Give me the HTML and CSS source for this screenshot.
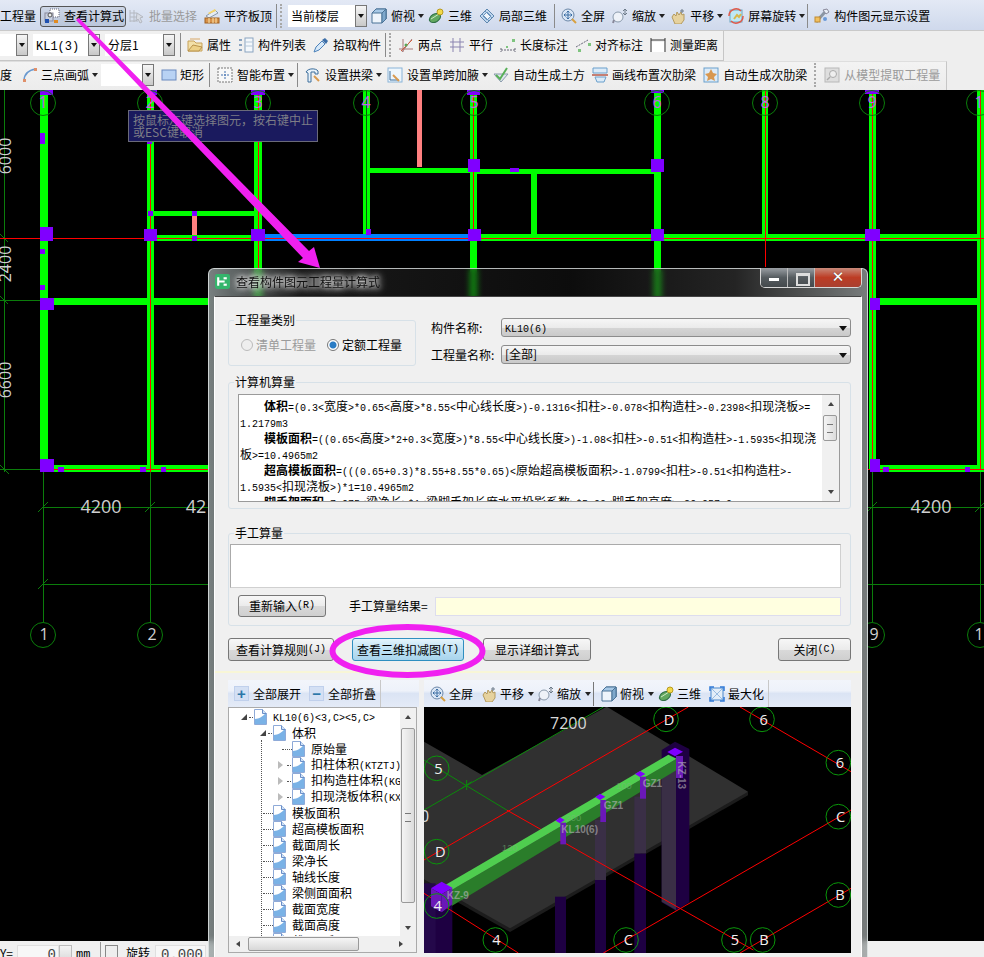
FILE: index.html
```html
<!DOCTYPE html>
<html lang="zh-CN">
<head>
<meta charset="utf-8">
<title>查看构件图元工程量计算式</title>
<link rel="stylesheet" href="styles.css">
</head>
<body>
<svg class="defs" width="0" height="0" aria-hidden="true">
  <symbol id="i-calc" viewBox="0 0 16 16"><rect x="6" y="1" width="9" height="8" fill="#fff" stroke="#667" stroke-dasharray="1 1"/><rect x="1" y="5" width="8" height="8" fill="#c8d0e0" stroke="#889"/><rect x="1" y="11" width="4" height="4" fill="#1e50b0"/><rect x="10" y="12" width="4" height="3" fill="#e08a20"/><circle cx="6" cy="7" r="2" fill="#eee" stroke="#555"/></symbol>
  <symbol id="i-batch" viewBox="0 0 16 16"><g fill="none" stroke="#b4b8c0"><path d="M1 2v12M5 2v12M1 5h7M1 9h6M1 13h8"/><path d="M8 5l6 4-3 1 2 4-2 1-2-4-2 2z" fill="#d8dce4"/></g></symbol>
  <symbol id="i-align" viewBox="0 0 16 16"><path d="M2 8l9-6 3 3-9 5z" fill="#e4ecf6" stroke="#8a98a8"/><path d="M4 5l7-4 1 2-7 3z" fill="#f4d46a"/><rect x="1" y="10" width="14" height="5" fill="#d8924a" stroke="#a06020"/><path d="M5 10v5M9 10v5M12 10v5" stroke="#fbe7b0"/></symbol>
  <symbol id="i-cube" viewBox="0 0 16 16"><path d="M1 5l4-4h10v10l-4 4H1z" fill="#eef4fb" stroke="#4a7296"/><path d="M5 1h10l-4 4H1z" fill="#a6c8e6" stroke="#4a7296"/><path d="M11 5v10M15 1v10" fill="none" stroke="#4a7296"/><path d="M11 5l4-4v10l-4 4z" fill="#7ea8cc" stroke="#4a7296"/></symbol>
  <symbol id="i-3d" viewBox="0 0 16 16"><ellipse cx="7" cy="10" rx="6" ry="4" transform="rotate(-30 7 10)" fill="#62a860" stroke="#2f6f45"/><path d="M3 11l8-5" stroke="#cfe8c6"/><circle cx="12" cy="4" r="3" fill="#f2d94a" stroke="#b89a20"/></symbol>
  <symbol id="i-part" viewBox="0 0 16 16"><path d="M1 8l7-7 7 7-7 7z" fill="#bfd6ee" stroke="#5c86ae"/><path d="M4 8l4-4 4 4-4 4zM6 3l7 7M3 6l7 7" fill="#eef4fb" stroke="#6c96be"/></symbol>
  <symbol id="i-full" viewBox="0 0 16 16"><circle cx="7" cy="7" r="6" fill="#dbe7f6" stroke="#6d88a8"/><path d="M7 3v8M3 7h8M5.500 4.500L7 3l1.500 1.500M5.500 9.500L7 11l1.500-1.500M4.500 5.500L3 7l1.500 1.500M9.500 5.500L11 7 9.500 8.500" fill="none" stroke="#3c6ea4"/><path d="M11 11l4 4" stroke="#d8a040" stroke-width="2"/></symbol>
  <symbol id="i-zoom" viewBox="0 0 16 16"><circle cx="6" cy="9" r="5" fill="#eef2f8" stroke="#8a9aac"/><path d="M2 12l-1 3" stroke="#889" stroke-width="2"/><path d="M13 1v6M11 3l2-2 2 2M11 5l2 2 2-2" fill="none" stroke="#6c7a88"/></symbol>
  <symbol id="i-pan" viewBox="0 0 16 16"><path d="M2 9l2-3 2 2 1-4 2 3 2-3 1 3 2-1v6l-3 4H5z" fill="#e6d29e" stroke="#b49a5e"/><path d="M12 1v4M10 3h4" stroke="#6c7a88"/></symbol>
  <symbol id="i-rot" viewBox="0 0 16 16"><rect x="2" y="2" width="12" height="12" fill="#bfe8f4" stroke="#69a8c4"/><path d="M6 11l3-4 2 2 2-3" fill="none" stroke="#d8b84a" stroke-width="2"/><path d="M1 8a7 7 0 0 1 12-5M15 8a7 7 0 0 1-12 5" fill="none" stroke="#e05a4a" stroke-width="1.500"/></symbol>
  <symbol id="i-set" viewBox="0 0 16 16"><path d="M2 14L11 4" stroke="#8a96a4" stroke-width="3"/><path d="M9 2l4-1 2 3-3 2z" fill="#e8eef6" stroke="#889"/><rect x="1" y="9" width="5" height="5" fill="#f0c060" stroke="#c08a30"/><circle cx="11" cy="11" r="2" fill="#6a9ad8"/></symbol>
  <symbol id="i-prop" viewBox="0 0 16 16"><path d="M1 4h6l2 2h6v8H1z" fill="#f3e0a8" stroke="#c8a25a"/><path d="M1 14l5-6 9 2-3 4z" fill="#ecd087" stroke="#b8924a"/><path d="M3 2h10" stroke="#d8a868"/></symbol>
  <symbol id="i-list" viewBox="0 0 16 16"><g fill="#8aa4c0"><rect x="1" y="2" width="3" height="2"/><rect x="1" y="7" width="3" height="2"/><rect x="1" y="12" width="3" height="2"/></g><rect x="7" y="1" width="8" height="14" fill="#f4f8fc" stroke="#8aa4c0"/><path d="M7 5h8M7 9h8" stroke="#b4c6d8"/></symbol>
  <symbol id="i-pick" viewBox="0 0 16 16"><path d="M1 15l2-5 6-6 3 3-6 6z" fill="#d6e8f8" stroke="#4d82ba"/><path d="M9 3l3-2 3 3-2 3z" fill="#3c6ea8"/></symbol>
  <symbol id="i-two" viewBox="0 0 16 16"><path d="M1 12h14M4 15L14 2M5 2v13" fill="none" stroke="#a87878"/><path d="M3 14L14 3" stroke="#d06040"/><circle cx="8" cy="8" r="1.500" fill="#58a858"/></symbol>
  <symbol id="i-par" viewBox="0 0 16 16"><path d="M4 1v14M11 1v14M1 5h14M1 10h14" stroke="#8a84b0" fill="none"/></symbol>
  <symbol id="i-len" viewBox="0 0 16 16"><path d="M1 11v4M15 11v4M1 13h14" stroke="#667" stroke-dasharray="2 1" fill="none"/><rect x="12" y="2" width="3" height="3" fill="#7ec47e"/><rect x="6" y="9" width="2" height="2" fill="#7ec47e"/></symbol>
  <symbol id="i-adim" viewBox="0 0 16 16"><path d="M1 10L13 3" stroke="#667" stroke-dasharray="2 1" fill="none"/><rect x="3" y="12" width="3" height="3" fill="#7ec47e"/><rect x="13" y="6" width="3" height="3" fill="#7ec47e"/></symbol>
  <symbol id="i-meas" viewBox="0 0 16 16"><path d="M1 1v14M15 1v14M1 3h14" stroke="#333" fill="none"/><rect x="2" y="5" width="12" height="10" fill="#fff"/></symbol>
  <symbol id="i-arc" viewBox="0 0 16 16"><path d="M2 14C2 7 7 3 14 2" fill="none" stroke="#6a9ad0" stroke-width="1.500"/><rect x="1" y="12" width="3" height="3" fill="#e0906a"/><rect x="12" y="1" width="3" height="3" fill="#e0906a"/></symbol>
  <symbol id="i-rect" viewBox="0 0 16 16"><rect x="1" y="3" width="14" height="10" fill="#b8d2f4" stroke="#6a8abf"/></symbol>
  <symbol id="i-smart" viewBox="0 0 16 16"><rect x="1" y="1" width="14" height="14" fill="#f8f8f8" stroke="#777" stroke-dasharray="2 1"/><path d="M8 4v8M4 8h8" stroke="#4070b0" stroke-dasharray="2 1"/></symbol>
  <symbol id="i-arch" viewBox="0 0 16 16"><path d="M1 5C3 1 11 1 13 4v3H10V5H6v10H3V6z" fill="#e8f2fa" stroke="#3c6e9c"/><path d="M9 9l5 5" stroke="#d89a50" stroke-width="2"/></symbol>
  <symbol id="i-hau" viewBox="0 0 16 16"><rect x="1" y="1" width="14" height="14" fill="#eef6fc" stroke="#8ab4d8"/><path d="M3 4v9h9" fill="none" stroke="#3c6e9c"/><path d="M6 8l6 6" stroke="#d89a50" stroke-width="2"/></symbol>
  <symbol id="i-soil" viewBox="0 0 16 16"><path d="M1 7l7 8 7-8z" fill="#dfe6ee" stroke="#8a9aac"/><path d="M3 8l4 4L14 1" fill="none" stroke="#58b058" stroke-width="2"/></symbol>
  <symbol id="i-line" viewBox="0 0 16 16"><path d="M1 1h14v5H1zM3 10l2 5h7l2-5z" fill="#dcebf8" stroke="#6aa0cc"/><path d="M0 8h16" stroke="#b85a4a" stroke-width="1.500"/></symbol>
  <symbol id="i-auto" viewBox="0 0 16 16"><rect x="1" y="1" width="14" height="14" fill="#dcebf8" stroke="#6aa0cc"/><path d="M8 2l2 4 4 1-3 3 1 4-4-2-4 2 1-4-3-3 4-1z" fill="#d89850"/></symbol>
  <symbol id="i-ext" viewBox="0 0 16 16"><rect x="1" y="1" width="14" height="14" fill="#dedede" stroke="#b8b8b8"/><circle cx="9" cy="7" r="3.500" fill="#eee" stroke="#aaa"/><path d="M6 10l-3 3" stroke="#aaa" stroke-width="1.500"/></symbol>
  <symbol id="i-max" viewBox="0 0 16 16"><rect x="2" y="2" width="12" height="12" fill="#e4eef8" stroke="#4a88cc"/><path d="M1 5V1h4M11 1h4v4M15 11v4h-4M5 15H1v-4" fill="none" stroke="#2f7ad8" stroke-width="1.500"/><path d="M3 3l10 10M13 3L3 13" stroke="#9abce0"/></symbol>
  <symbol id="i-doc" viewBox="0 0 13 16"><path d="M.5.5h8l4 4v11H.5z" fill="#fff" stroke="#8eaad8"/><path d="M1 15V10c4 0 8-3 11-6v11z" fill="#7ab2e6"/><path d="M8.500.5v4h4" fill="#cfe2f6" stroke="#6a8ec8"/></symbol>
</svg>

<div class="app">
  <div class="rows">
    <div class="row row1">
      <span class="txt first">工程量</span>
      <span class="hot"><svg class="ic"><use href="#i-calc"/></svg>查看计算式</span>
      <span class="it off"><svg class="ic"><use href="#i-batch"/></svg>批量选择</span>
      <span class="it"><svg class="ic"><use href="#i-align"/></svg>平齐板顶</span>
      <span class="sep"></span><span class="grip"></span>
      <span class="combo w79"><span class="val">当前楼层</span><span class="btn"></span></span>
      <span class="it"><svg class="ic"><use href="#i-cube"/></svg>俯视</span><span class="arr"></span>
      <span class="it"><svg class="ic"><use href="#i-3d"/></svg>三维</span>
      <span class="it"><svg class="ic"><use href="#i-part"/></svg>局部三维</span>
      <span class="sep s2"></span>
      <span class="it"><svg class="ic"><use href="#i-full"/></svg>全屏</span>
      <span class="it"><svg class="ic"><use href="#i-zoom"/></svg>缩放</span><span class="arr wider"></span>
      <span class="it"><svg class="ic"><use href="#i-pan"/></svg>平移</span><span class="arr wider"></span>
      <span class="it"><svg class="ic"><use href="#i-rot"/></svg>屏幕旋转</span><span class="arr tight"></span>
      <span class="sep s2"></span>
      <span class="it"><svg class="ic"><use href="#i-set"/></svg>构件图元显示设置</span>
    </div>
    <div class="row row2">
      <span class="combo w28"><span class="val"></span><span class="btn"></span></span>
      <span class="combo w67"><span class="val"><code class="big">KL1(3)</code></span><span class="btn"></span></span>
      <span class="combo w70"><span class="val">分层1</span><span class="btn"></span></span>
      <span class="sep s2"></span>
      <span class="it"><svg class="ic"><use href="#i-prop"/></svg>属性</span>
      <span class="it"><svg class="ic"><use href="#i-list"/></svg>构件列表</span>
      <span class="it"><svg class="ic"><use href="#i-pick"/></svg>拾取构件</span>
      <span class="sep"></span><span class="grip wide"></span>
      <span class="it"><svg class="ic"><use href="#i-two"/></svg>两点</span>
      <span class="it"><svg class="ic"><use href="#i-par"/></svg>平行</span>
      <span class="it"><svg class="ic"><use href="#i-len"/></svg>长度标注</span>
      <span class="it"><svg class="ic"><use href="#i-adim"/></svg>对齐标注</span>
      <span class="it"><svg class="ic"><use href="#i-meas"/></svg>测量距离</span>
    </div>
    <div class="row row3">
      <span class="txt first">度</span>
      <span class="it lead"><svg class="ic"><use href="#i-arc"/></svg>三点画弧</span><span class="arr a-lead"></span>
      <span class="combo w53"><span class="val"></span><span class="btn"></span></span>
      <span class="it lead"><svg class="ic"><use href="#i-rect"/></svg>矩形</span>
      <span class="sep"></span>
      <span class="it"><svg class="ic"><use href="#i-smart"/></svg>智能布置</span><span class="arr"></span>
      <span class="sep"></span>
      <span class="it"><svg class="ic"><use href="#i-arch"/></svg>设置拱梁</span><span class="arr tight"></span>
      <span class="it"><svg class="ic"><use href="#i-hau"/></svg>设置单跨加腋</span><span class="arr tight"></span>
      <span class="it"><svg class="ic"><use href="#i-soil"/></svg>自动生成土方</span>
      <span class="it"><svg class="ic"><use href="#i-line"/></svg>画线布置次肋梁</span>
      <span class="it"><svg class="ic"><use href="#i-auto"/></svg>自动生成次肋梁</span>
      <span class="grip wide"></span>
      <span class="it off"><svg class="ic"><use href="#i-ext"/></svg>从模型提取工程量</span>
    </div>
  </div>

  <svg class="cad" viewBox="0 90 984 851">
    <g class="dark">
      <path d="M4 90V472M0 238H43M0 300H43M0 469H43M43 472V622M150 472V622M258 472V622M872 472V622M980 472V622M43 507H208M43 584H208M868 507H984M868 584H984"/>
      <path class="slash" d="M0 234l8 8M0 296l8 8M0 465l9 9M38 512l10-10M145 512l10-10M38 589l10-10M867 512l10-10M975 512l10-10"/>
    </g>
    <g class="gr">
      <rect x="40" y="90" width="8" height="378"/>
      <rect x="147" y="90" width="7" height="378"/>
      <rect x="254" y="90" width="8" height="210"/>
      <rect x="363" y="90" width="7" height="145"/>
      <rect x="470" y="90" width="7" height="210"/>
      <rect x="531" y="172" width="6" height="63"/>
      <rect x="654" y="90" width="7" height="210"/>
      <rect x="762" y="90" width="6" height="148"/>
      <rect x="869" y="90" width="7" height="380"/>
      <rect x="977" y="90" width="7" height="380"/>
      <rect x="148" y="211" width="107" height="5"/>
      <rect x="157" y="235" width="100" height="6"/>
      <rect x="370" y="168" width="100" height="5"/>
      <rect x="477" y="169" width="177" height="5"/>
      <rect x="474" y="234" width="510" height="7"/>
      <rect x="54" y="298" width="154" height="7"/>
      <rect x="880" y="298" width="104" height="7"/>
      <rect x="54" y="465" width="154" height="7"/>
      <rect x="880" y="465" width="104" height="7"/>
    </g>
    <rect class="blue" x="262" y="234" width="212" height="7"/>
    <g class="pk"><rect x="417" y="90" width="5" height="77"/><rect x="192" y="216" width="5" height="19"/></g>
    <path class="rd" d="M0 238H984M40 469H208M868 469H984M150 90V472M258 90V268M473 90V238M765 90V267M872 90V470M980 90V470"/>
    <path class="blk" d="M366 90V235"/>
    <g class="pu">
      <rect x="40" y="90" width="13" height="5"/><rect x="147" y="90" width="10" height="5"/><rect x="251" y="90" width="14" height="5"/><rect x="467" y="90" width="13" height="5"/><rect x="651" y="90" width="13" height="3"/><rect x="865" y="90" width="14" height="4"/>
      <rect x="40" y="133" width="5" height="11"/><rect x="40" y="227" width="13" height="14"/><rect x="40" y="249" width="5" height="5"/><rect x="40" y="285" width="5" height="5"/><rect x="40" y="298" width="14" height="12"/><rect x="40" y="459" width="14" height="13"/><rect x="58" y="467" width="6" height="5"/><rect x="140" y="467" width="6" height="5"/><rect x="161" y="467" width="5" height="5"/>
      <rect x="147" y="141" width="5" height="3"/><rect x="148" y="211" width="5" height="5"/><rect x="144" y="229" width="13" height="12"/><rect x="192" y="211" width="5" height="5"/><rect x="192" y="236" width="5" height="5"/><rect x="251" y="229" width="14" height="12"/>
      <rect x="468" y="159" width="12" height="13"/><rect x="468" y="229" width="13" height="12"/><rect x="651" y="159" width="13" height="13"/><rect x="651" y="229" width="13" height="12"/><rect x="865" y="229" width="15" height="12"/><rect x="870" y="298" width="10" height="12"/><rect x="870" y="459" width="10" height="13"/><rect x="883" y="467" width="6" height="5"/><rect x="965" y="467" width="5" height="5"/><rect x="510" y="168" width="9" height="4"/><rect x="366" y="229" width="5" height="6"/>
    </g>
    <g class="ring">
      <circle cx="43" cy="103" r="12.500"/><circle cx="150" cy="103" r="12.500"/><circle cx="258" cy="103" r="12.500"/><circle cx="366" cy="103" r="12.500"/><circle cx="474" cy="103" r="12.500"/><circle cx="657" cy="103" r="12.500"/><circle cx="765" cy="103" r="12.500"/><circle cx="872" cy="103" r="12.500"/><circle cx="979" cy="103" r="12.500"/>
      <circle cx="43" cy="635" r="12.500"/><circle cx="150" cy="635" r="12.500"/><circle cx="872" cy="635" r="12.500"/><circle cx="980" cy="635" r="12.500"/>
    </g>
    <g class="num">
      <text x="43" y="108">1</text><text x="150" y="108">2</text><text x="258" y="108">3</text><text x="366" y="108">4</text><text x="474" y="108">5</text><text x="657" y="108">6</text><text x="765" y="108">8</text><text x="872" y="108">9</text><text x="979" y="108">1</text>
    </g>
    <g class="num2">
      <text x="44" y="640">1</text><text x="152" y="640">2</text><text x="874" y="640">9</text><text x="979" y="640">1</text>
    </g>
    <g class="dim">
      <text x="101" y="513">4200</text><text x="196" y="513">42</text><text x="931" y="513">4200</text>
      <text class="vert" transform="translate(11 156) rotate(-90)">6000</text><text class="vert" transform="translate(11 264) rotate(-90)">2400</text><text class="vert" transform="translate(11 380) rotate(-90)">6600</text>
    </g>
  </svg>

  <div class="status">
    <span class="lbl">Y=</span>
    <span class="num-in w42"><code>0</code></span><span class="spin"></span>
    <span class="lbl mm"><code>mm</code></span>
    <span class="vbar"></span>
    <span class="check"></span>
    <span class="lbl rot">旋转</span>
    <span class="num-in w51"><code>0.000</code></span>
  </div>
</div>

<div class="tip">按鼠标左键选择图元，按右键中止<br>或ESC键取消</div>

<section class="dialog">
  <header class="title">
    <svg class="appicon" viewBox="0 0 14 14"><rect width="14" height="14" rx="2" fill="#35b56c"/><path d="M3 3v8M3 7h6M9 4v0" stroke="#fff" stroke-width="2" fill="none"/><rect x="8" y="3" width="3" height="2" fill="#fff"/><rect x="8" y="9" width="3" height="2" fill="#fff"/></svg>
    <span class="title-text">查看构件图元工程量计算式</span>
    <span class="caps"><span class="cap min"></span><span class="cap max"></span><span class="cap close">✕</span></span>
  </header>
  <div class="client">
    <div class="top">
      <div class="group kind">
        <span class="legend">工程量类别</span>
        <div class="radios">
          <span class="radio off-r"></span><span class="r-t dis">清单工程量</span>
          <span class="radio on"></span><span class="r-t">定额工程量</span>
        </div>
      </div>
      <div class="fields">
        <div class="field"><span class="f-l">构件名称:</span><span class="drop"><code>KL10(6)</code></span></div>
        <div class="field"><span class="f-l">工程量名称:</span><span class="drop">[全部]</span></div>
      </div>
    </div>

    <div class="group calc">
      <span class="legend">计算机算量</span>
      <div class="textbox">
        <div class="lines">
          <p class="ind"><b>体积</b><code>=(0.3&lt;</code>宽度<code>&gt;*0.65&lt;</code>高度<code>&gt;*8.55&lt;</code>中心线长度<code>&gt;)-0.1316&lt;</code>扣柱<code>&gt;-0.078&lt;</code>扣构造柱<code>&gt;-0.2398&lt;</code>扣现浇板<code>&gt;=</code></p>
          <p><code>1.2179m3</code></p>
          <p class="ind"><b>模板面积</b><code>=((0.65&lt;</code>高度<code>&gt;*2+0.3&lt;</code>宽度<code>&gt;)*8.55&lt;</code>中心线长度<code>&gt;)-1.08&lt;</code>扣柱<code>&gt;-0.51&lt;</code>扣构造柱<code>&gt;-1.5935&lt;</code>扣现浇</p>
          <p>板<code>&gt;=10.4965m2</code></p>
          <p class="ind"><b>超高模板面积</b><code>=(((0.65+0.3)*8.55+8.55*0.65)&lt;</code>原始超高模板面积<code>&gt;-1.0799&lt;</code>扣柱<code>&gt;-0.51&lt;</code>扣构造柱<code>&gt;-</code></p>
          <p><code>1.5935&lt;</code>扣现浇板<code>&gt;)*1=10.4965m2</code></p>
          <p class="ind"><b>脚手架面积</b><code>=7.975&lt;</code>梁净长<code>&gt;*1&lt;</code>梁脚手架长度水平投影系数<code>&gt;*5.99&lt;</code>脚手架高度<code>&gt;=26.957 9</code></p>
        </div>
        <div class="vs tb-vs"><span class="up"></span><span class="thumb t-calc"></span><span class="down"></span></div>
      </div>
    </div>

    <div class="group manual">
      <span class="legend">手工算量</span>
      <div class="area"></div>
      <div class="man-row">
        <span class="pbtn redo">重新输入<code>(R)</code></span>
        <span class="res-l">手工算量结果=</span>
        <span class="res"></span>
      </div>
    </div>

    <div class="actions">
      <span class="pbtn a1">查看计算规则<code>(J)</code></span>
      <span class="pbtn a2">查看三维扣减图<code>(T)</code></span>
      <span class="pbtn a3">显示详细计算式</span>
      <span class="pbtn a4">关闭<code>(C)</code></span>
    </div>

    <div class="panels">
      <div class="left">
        <div class="bar">
          <span class="sq">+</span><span class="bt">全部展开</span>
          <span class="sq">−</span><span class="bt">全部折叠</span>
          <span class="bsep"></span>
        </div>
        <div class="tree">
          <div class="rows-t">
            <span class="trunk"></span>
            <div class="n l0"><span class="exp open"></span><span class="dot"></span><svg class="doc"><use href="#i-doc"/></svg><span><code>KL10(6)&lt;3,C&gt;&lt;5,C&gt;</code></span></div>
            <div class="n l1"><span class="exp open"></span><span class="dot"></span><svg class="doc"><use href="#i-doc"/></svg><span>体积</span></div>
            <div class="n l2"><span class="dot long"></span><svg class="doc"><use href="#i-doc"/></svg><span>原始量</span></div>
            <div class="n l2"><span class="exp closed"></span><span class="dot"></span><svg class="doc"><use href="#i-doc"/></svg><span>扣柱体积<code>(KTZTJ)</code></span></div>
            <div class="n l2"><span class="exp closed"></span><span class="dot"></span><svg class="doc"><use href="#i-doc"/></svg><span>扣构造柱体积<code>(KGZTJ)</code></span></div>
            <div class="n l2"><span class="exp closed"></span><span class="dot"></span><svg class="doc"><use href="#i-doc"/></svg><span>扣现浇板体积<code>(KXJBTJ)</code></span></div>
            <div class="n l1"><span class="dot long"></span><svg class="doc"><use href="#i-doc"/></svg><span>模板面积</span></div>
            <div class="n l1"><span class="dot long"></span><svg class="doc"><use href="#i-doc"/></svg><span>超高模板面积</span></div>
            <div class="n l1"><span class="dot long"></span><svg class="doc"><use href="#i-doc"/></svg><span>截面周长</span></div>
            <div class="n l1"><span class="dot long"></span><svg class="doc"><use href="#i-doc"/></svg><span>梁净长</span></div>
            <div class="n l1"><span class="dot long"></span><svg class="doc"><use href="#i-doc"/></svg><span>轴线长度</span></div>
            <div class="n l1"><span class="dot long"></span><svg class="doc"><use href="#i-doc"/></svg><span>梁侧面面积</span></div>
            <div class="n l1"><span class="dot long"></span><svg class="doc"><use href="#i-doc"/></svg><span>截面宽度</span></div>
            <div class="n l1"><span class="dot long"></span><svg class="doc"><use href="#i-doc"/></svg><span>截面高度</span></div>
            <div class="n l1"><span class="dot long"></span><svg class="doc"><use href="#i-doc"/></svg><span>截面面积</span></div>
          </div>
          <div class="vs tree-vs"><span class="up"></span><span class="thumb t-tree"></span><span class="down"></span></div>
          <div class="hs"><span class="lf"></span><span class="hthumb"></span><span class="rg"></span></div>
        </div>
      </div>
      <div class="right">
        <div class="bar">
          <span class="it"><svg class="ic"><use href="#i-full"/></svg>全屏</span>
          <span class="it"><svg class="ic"><use href="#i-pan"/></svg>平移</span><span class="arr"></span>
          <span class="it"><svg class="ic"><use href="#i-zoom"/></svg>缩放</span><span class="arr tight"></span>
          <span class="bsep tight"></span>
          <span class="it"><svg class="ic"><use href="#i-cube"/></svg>俯视</span><span class="arr"></span>
          <span class="it"><svg class="ic"><use href="#i-3d"/></svg>三维</span>
          <span class="it"><svg class="ic"><use href="#i-max"/></svg>最大化</span>
          <span class="bsep"></span>
        </div>
        <svg class="view" viewBox="12 81 1281 738">
          <rect x="12" y="81" width="1281" height="738" fill="#000"/>
          <path fill="#1c1c1c" d="M984 335v11L270 756 12 610v-12z"/>
          <path fill="#303030" d="M12 185L186 285 560 80 984 335 270 745 12 598z"/>
          <g fill="#1e0042">
            <rect x="33" y="640" width="64" height="180"/><rect x="12" y="610" width="35" height="210" fill="#24084a"/>
            <rect x="405" y="650" width="33" height="170"/><rect x="525" y="600" width="33" height="220"/><rect x="643" y="520" width="35" height="300"/>
            <path d="M725 210l40-25 43 22v460l-40 25-43-25z"/>
          </g>
          <g fill="#3a2f46">
            <rect x="525" y="420" width="33" height="180"/><rect x="643" y="350" width="35" height="170"/><path d="M725 280l43 -10v420l-43-25z"/>
          </g>
          <g class="v-red">
            <path d="M12 540L805 81M960 81L1293 275M550 819L1293 390M960 819L1293 625M260 390L1000 810M12 640L295 819"/>
          </g>
          <g class="v-grn"><path d="M550 81L12 390M12 240L260 390M125 325l30-20M140 300v30"/></g>
          <path fill="#2a7d2a" d="M95 630L770 236v34L95 678z"/>
          <path fill="#4fce4f" d="M72 617L745 224l25 12L95 630z"/>
          <g fill="#7f00ff">
            <path d="M33 625l32-20 32 18-32 20z"/><path d="M407 422l13-10 14 8-14 10z"/><path d="M526 351l14-10 16 9-16 10z"/><path d="M645 282l15-9 16 9-16 9z"/><path d="M742 216l23-13 24 12-24 14z"/>
          </g>
          <g fill="#6a18b8">
            <path d="M33 625l32 18v54l-32-18z"/><path d="M65 643l32-20v50l-32 24z"/>
            <rect x="421" y="428" width="17" height="65"/><rect x="541" y="360" width="17" height="66"/><rect x="660" y="290" width="18" height="66"/><rect x="768" y="228" width="21" height="66"/>
          </g>
          <g class="v-lab">
            <text x="80" y="658">KZ-9</text><text x="424" y="460">KL10(6)</text><text x="551" y="388">GZ1</text><text x="668" y="320">GZ1</text>
            <text transform="translate(775 244) rotate(90)">KZ-13</text>
          </g>
          <g class="v-dim"><text x="246" y="512">120</text><text x="437" y="424">200</text><text x="588" y="328">100</text></g>
          <text class="v-big" x="390" y="148">7200</text>
          <text class="v-big" x="0" y="426">0</text>
          <g class="v-ring">
            <circle cx="738" cy="118" r="37"/><circle cx="1026" cy="118" r="37"/><circle cx="1255" cy="248" r="37"/><circle cx="50" cy="265" r="37"/><circle cx="1255" cy="410" r="37"/><circle cx="50" cy="515" r="37"/><circle cx="1255" cy="645" r="37"/><circle cx="50" cy="678" r="37"/><circle cx="226" cy="780" r="37"/><circle cx="618" cy="780" r="37"/><circle cx="942" cy="780" r="37"/><circle cx="1028" cy="780" r="37"/>
          </g>
          <g class="v-let">
            <text x="747" y="134">D</text><text x="1031" y="134">6</text><text x="1260" y="264">6</text><text x="55" y="281">5</text><text x="1262" y="426">C</text><text x="61" y="531">D</text><text x="1260" y="661">B</text><text x="53" y="694">4</text><text x="229" y="796">4</text><text x="625" y="796">C</text><text x="945" y="796">5</text><text x="1032" y="796">B</text>
          </g>
        </svg>
      </div>
    </div>
  </div>
</section>

<svg class="marks" viewBox="0 0 984 957" aria-hidden="true">
  <path class="arrow" d="M76 20L79 18 309 251 314 247 320 268 298 262 303 258z"/>
  <ellipse class="ring-mark" cx="407.500" cy="651" rx="75" ry="24"/>
</svg>
</body>
</html>
```
FILE: styles.css
```css
* { box-sizing: border-box; }
html, body { margin: 0; padding: 0; }
body {
  width: 984px;
  height: 957px;
  overflow: hidden;
  position: relative;
  background: #000;
  font: 12px/16px "Noto Sans CJK SC", "Liberation Sans", sans-serif;
  color: #000;
}
.defs { position: absolute; }
code { font: 10px/16px "Liberation Mono", monospace; }
code.big { font-size: 12px; }

.app { display: flex; flex-direction: column; height: 957px; }
.rows { height: 90px; background: #eee; flex: none; }
.row { display: flex; align-items: center; white-space: nowrap; }
.row1 { height: 31px; width: 100%; background: linear-gradient(#e3e9f5, #cfd9ec); border-bottom: 1px solid #c9c9c9; padding: 2px 47px 0 0; }
.row2 { height: 30px; width: 724px; background: #f0f0f0; border-bottom: 1px solid #c6c6c6; border-right: 1px solid #c6c6c6; padding-bottom: 2px; }
.row3 { height: 29px; width: 947px; background: linear-gradient(#f3f3f3, #ececec); border-right: 1px solid #c6c6c6; border-top: 1px solid #dedede; padding-bottom: 2px; }

.txt.first { margin-right: 4px; flex: none; }
.row3 .txt.first { margin-right: 10px; }
.it { display: inline-flex; align-items: center; gap: 4px; margin-right: 7px; flex: none; }
.ic { width: 16px; height: 16px; flex: none; }
.it.off { color: #9a9a9a; }
.hot {
  display: inline-flex; align-items: center; gap: 4px; height: 21px; width: 86px; padding-left: 3px;
  margin-right: 3px; flex: none;
  border: 1px solid #555; border-radius: 3px;
  background: linear-gradient(#cdd6e6, #bac6da);
}
.arr { width: 0; height: 0; border: 3.500px solid transparent; border-top: 4px solid #222; border-bottom: 0; margin: 0 6px 0 -4px; flex: none; }
.row1 .arr { margin-right: 4px; }
.row1 .arr.wider { margin-right: 5px; }
.row1 .arr.tight { margin-right: 2px; }
.row3 .arr { margin-right: 5px; }
.row3 .arr.tight { margin-right: 5px; }
.row3 .arr.a-lead { margin-right: 3px; }
.sep { width: 1px; height: 24px; background: #8a8a8a; margin: 0 6px 0 -3px; flex: none; }
.sep.s2 { margin: 0 6px 0 0; }
.row3 .sep { margin: 0 7px 0 -2px; }
.grip { width: 2px; height: 24px; margin: 0 6px 0 -3px; flex: none; border-left: 2px dotted #a8a8a8; }
.grip.wide { margin: 0 8px 0 0; }
.row2 .grip.wide { margin-right: 7px; margin-left: -3px; }
.combo { display: flex; height: 22px; flex: none; margin-right: 5px; }
.val { flex: 1; background: #fff; padding: 3px 0 0 3px; }
.btn { width: 12px; background: linear-gradient(#f6f6f6, #c8c8c8); border: 1px solid #777; position: relative; }
.btn::after { content: ""; position: absolute; left: 2px; top: 8px; border: 3.500px solid transparent; border-top: 4px solid #111; border-bottom: 0; }
.w79 { width: 79px; margin-right: 4px; }
.w28 { width: 28px; }
.w67 { width: 67px; }
.w70 { width: 70px; margin-right: 5px; }
.w53 { width: 53px; margin-right: 7px; }
.it.lead { gap: 3px; }

.cad { display: block; width: 984px; height: 851px; flex: none; background: #000; }
.dark path { fill: none; stroke: #0b7d0b; stroke-width: 1; shape-rendering: crispEdges; }
.dark .slash { shape-rendering: auto; }
.gr rect { fill: #00ff00; }
.blue { fill: #0080ff; }
.pk rect { fill: #ff8080; }
.rd { fill: none; stroke: #ff0000; stroke-width: 1; shape-rendering: crispEdges; }
.blk { stroke: #0a5a0a; fill: none; shape-rendering: crispEdges; }
.pu rect { fill: #8000ff; }
.ring circle { fill: none; stroke: #0b7d0b; stroke-width: 1; }
.num text { fill: #c060f0; font: 16px "Open Sans", sans-serif; text-anchor: middle; }
.num2 text { fill: #d0d0d0; font: 16px "Open Sans", sans-serif; text-anchor: middle; }
.dim text { fill: #cfcfcf; font: 18px "Open Sans", sans-serif; text-anchor: middle; }
.dim text.vert { font-size: 16px; }

.status { height: 16px; background: #f0f0f0; display: flex; align-items: flex-start; flex: none; overflow: hidden; padding-top: 4px; }
.lbl { width: 17px; flex: none; }
.num-in { height: 20px; border: 1px solid #dfdfdf; background: #f7f7f7; text-align: right; padding-right: 2px; flex: none; }
.num-in code { font-size: 14px; color: #444; }
.w42 { width: 42px; }
.w51 { width: 51px; }
.spin { width: 13px; height: 20px; border: 1px solid #bbb; background: linear-gradient(#f4f4f4, #d4d4d4); flex: none; }
.lbl.mm { width: 24px; margin-left: 4px; }
.lbl.mm code { font-size: 12px; }
.vbar { width: 1px; height: 20px; background: #999; flex: none; margin-right: 4px; margin-top: -3px; }
.check { width: 13px; height: 13px; border: 1px solid #888; background: #eee; margin-right: 8px; flex: none; }
.lbl.rot { width: 24px; margin-right: 5px; }

.tip {
  position: absolute; left: 128px; top: 110px; width: 190px; height: 32px;
  background: #1a1a5e; border: 1px solid #6a6a7a; color: #7d7d86;
  padding: 3px 0 0 4px; line-height: 12px;
}

.dialog {
  position: absolute; left: 208px; top: 268px; width: 660px; height: 700px;
  border: 1px solid rgba(235, 240, 240, .75);
  border-bottom: 0;
  border-radius: 6px 6px 0 0;
  background: linear-gradient(90deg, rgba(150, 160, 160, .8) 0, rgba(45, 45, 45, .55) 14%, rgba(25, 25, 25, .5) 55%, rgba(60, 60, 60, .6) 80%, rgba(150, 155, 155, .8) 100%);
  backdrop-filter: blur(3px);
  padding: 0 5px;
}
.title { height: 27px; display: flex; align-items: center; position: relative; padding-bottom: 2px; }
.appicon { width: 15px; height: 15px; margin: 0 6px 0 1px; flex: none; }
.title-text { color: #101010; text-shadow: 0 0 5px #fff, 0 0 8px #ddd, 0 0 10px #ccc; }
.caps { position: absolute; right: 0; top: -1px; height: 20px; display: flex; border: 1px solid #d8d8d8; border-top: 0; border-radius: 0 0 5px 5px; overflow: hidden; }
.cap { display: block; height: 19px; position: relative; }
.min, .max { width: 27px; background: linear-gradient(#9a9fa4, #565c60 50%, #44494c); border-right: 1px solid #bbb; }
.min::after { content: ""; position: absolute; left: 8px; top: 10px; width: 10px; height: 3px; background: #fff; }
.max::after { content: ""; position: absolute; left: 8px; top: 5px; width: 10px; height: 8px; border: 2px solid #ddd; border-top-width: 3px; }
.close { width: 46px; background: linear-gradient(#c88a7a, #bd3c24 50%, #a84030); color: #fff; text-align: center; font: bold 15px/18px "DejaVu Sans", sans-serif; text-shadow: 0 0 1px #333; }

.client {
  height: 680px; background: #f0f0f0; border: 1px solid #fff; border-color: #444 #fff #fff #fff;
  padding: 0 10px 0 13px; position: relative;
}
.top { display: flex; align-items: flex-start; padding-top: 23px; }
.group { border: 1px solid #d7e1e8; border-radius: 3px; position: relative; }
.legend { position: absolute; left: 5px; top: -9px; background: #f0f0f0; padding: 0 1px; }
.kind { width: 188px; height: 46px; }
.radios { display: flex; align-items: center; padding: 16px 0 0 12px; }
.radio { width: 12px; height: 12px; border-radius: 50%; border: 1px solid #bbb; background: #eee; flex: none; }
.radio.on { background: radial-gradient(circle, #2a7cc4 0 3px, #fff 4px 6px); border-color: #777; margin-left: 11px; }
.r-t { margin-left: 3px; }
.r-t.dis { color: #9b9b9b; }
.fields { margin-left: 15px; flex: 1; margin-top: -2px; display: flex; flex-direction: column; gap: 8px; }
.field { display: flex; align-items: center; height: 19px; }
.f-l { width: 70px; flex: none; }
.drop {
  flex: 1; height: 19px; border: 1px solid #8c8c8c; border-radius: 3px; padding: 0 0 0 3px; line-height: 16px;
  background: linear-gradient(#f6f6f6, #ebebeb 50%, #d5d5d5 52%, #c9c9c9);
  position: relative;
}
.drop::after { content: ""; position: absolute; right: 3px; top: 7px; border: 4px solid transparent; border-top: 5px solid #111; border-bottom: 0; }

.calc { margin-top: 16px; height: 127px; padding: 11px 10px 0 9px; }
.textbox { height: 108px; background: #fff; border: 1px solid #9a9a9a; display: flex; }
.lines { flex: 1; overflow: hidden; padding: 3px 0 0 1px; white-space: nowrap; }
.lines p { margin: 0; height: 16px; }
.lines .ind { padding-left: 24px; }
.vs { background: #f0f0f0; display: flex; flex-direction: column; align-items: center; justify-content: space-between; flex: none; position: relative; }
.tb-vs { width: 17px; }
.up { width: 0; height: 0; margin-top: 7px; border: 3.500px solid transparent; border-bottom: 4px solid #444; border-top: 0; }
.down { width: 0; height: 0; margin-bottom: 7px; border: 3.500px solid transparent; border-top: 4px solid #444; border-bottom: 0; }
.thumb { position: absolute; left: 1px; width: 14px; border: 1px solid #999; border-radius: 2px; background: linear-gradient(90deg, #f4f4f4, #dcdcdc); }
.t-calc { top: 20px; height: 26px; }
.t-calc::after { content: ""; position: absolute; left: 3px; top: 8px; width: 6px; height: 7px; border-top: 1px solid #777; border-bottom: 1px solid #777; }

.manual { margin-top: 24px; height: 93px; padding: 10px 9px 0 1px; }
.area { height: 44px; background: #fff; border: 1px solid #d0d0d0; border-top-color: #aaa; border-left-color: #aaa; }
.man-row { display: flex; align-items: center; margin-top: 7px; padding-left: 8px; }
.pbtn {
  display: inline-flex; align-items: center; justify-content: center; height: 23px; flex: none;
  border: 1px solid #777; border-radius: 3px;
  background: linear-gradient(#f7f7f7, #ebebeb 50%, #d9d9d9 52%, #cfcfcf);
}
.redo { width: 88px; height: 22px; }
.res-l { margin-left: 23px; width: 86px; flex: none; }
.res { flex: 1; height: 19px; background: #ffffe0; border: 1px solid #dde; }

.actions { display: flex; margin-top: 12px; height: 24px; }
.a1 { width: 106px; }
.a2 { width: 112px; margin-left: 18px; background: linear-gradient(#e4f4fc, #bfe2f4 50%, #a8d4ec); border-color: #2f8fc0; }
.a3 { width: 108px; margin-left: 19px; }
.a4 { width: 73px; margin-left: auto; }

.panels { display: flex; gap: 5px; margin-top: 18px; border-top: 0; position: relative; }
.panels::before { content: ""; position: absolute; left: -13px; right: -10px; top: -9px; height: 2px; background: #f8f6d6; }
.left { width: 191px; flex: none; }
.right { width: 427px; flex: none; }
.bar { height: 27px; display: flex; align-items: center; padding-left: 6px; background: linear-gradient(#f2f5fb 0, #eef2fa 40%, #dbe4f4 50%, #e4ebf7); white-space: nowrap; }
.bar .it { margin-right: 8px; gap: 3px; }
.bar .arr { margin-right: 4px; }
.bar .arr.tight { margin-right: 3px; }
.sq { width: 15px; height: 15px; border: 1px solid #c0d0ec; background: #d4e0f4; color: #2c77a8; font: bold 15px/13px "Liberation Sans", sans-serif; text-align: center; flex: none; }
.bt { margin: 0 8px 0 4px; }
.bsep { width: 1px; height: 27px; background: #c8c8c8; margin-left: -4px; flex: none; }
.bsep.tight { background: #777; height: 24px; margin: 0 7px 0 -1px; }

.tree { height: 246px; width: 189px; position: relative; background: #fff; border: 1px solid #aaa; overflow: hidden; }
.rows-t { height: 229px; width: 172px; overflow: hidden; position: relative; padding-top: 1px; }
.trunk { position: absolute; left: 32px; top: 32px; height: 200px; border-left: 1px dotted #555; }
.n { height: 16px; display: flex; align-items: center; white-space: nowrap; position: relative; }
.doc { width: 13px; height: 16px; flex: none; margin-right: 6px; }
.l0 { padding-left: 11px; }
.l1 { padding-left: 30px; }
.l2 { padding-left: 49px; }
.exp { width: 7px; height: 7px; margin-right: 2px; flex: none; }
.exp.open { border-right: 6px solid #444; border-top: 6px solid transparent; width: 0; height: 0; margin: 0 2px 0 1px; }
.exp.closed { width: 0; height: 0; border-left: 5px solid #bbb; border-top: 4px solid transparent; border-bottom: 4px solid transparent; margin: 0 4px 0 0; }
.dot { width: 4px; border-top: 1px dotted #555; margin-right: 1px; flex: none; }
.dot.long { width: 10px; margin-left: 4px; margin-right: 0; }
.tree-vs { position: absolute; right: 0; top: 0; width: 16px; height: 229px; }
.t-tree { top: 20px; height: 175px; left: 1px; }
.t-tree::after { content: ""; position: absolute; left: 3px; top: 84px; width: 6px; height: 7px; border-top: 1px solid #777; border-bottom: 1px solid #777; }
.hs { position: absolute; left: 0; bottom: 0; right: 0; height: 16px; background: #f0f0f0; display: flex; align-items: center; }
.lf { width: 0; height: 0; margin-left: 7px; border: 3.500px solid transparent; border-right: 4px solid #444; border-left: 0; }
.rg { width: 0; height: 0; margin-left: 40px; border: 3.500px solid transparent; border-left: 4px solid #444; border-right: 0; }
.hthumb { width: 111px; height: 14px; margin-left: 8px; border: 1px solid #999; border-radius: 2px; background: linear-gradient(#f6f6f6, #d8d8d8); }

.view { display: block; width: 427px; height: 246px; }
.v-red path { fill: none; stroke: #ff0000; stroke-width: 3; }
.v-grn path { fill: none; stroke: #0b8a0b; stroke-width: 3; }
.v-lab text { fill: #b8b8b8; opacity: .6; font: bold 30px "Liberation Sans", sans-serif; }
.v-dim text { fill: #7ab87a; opacity: .55; font: 28px "Liberation Sans", sans-serif; }
.v-big { fill: #d8d8d8; font: 48px "Open Sans", sans-serif; }
.v-ring circle { fill: none; stroke: #0a960a; stroke-width: 3; }
.v-let text { fill: #f0f0f0; font: 44px "Open Sans", sans-serif; text-anchor: middle; }

.marks { position: absolute; left: 0; top: 0; width: 984px; height: 957px; pointer-events: none; }
.arrow { fill: #f020f0; }
.ring-mark { fill: none; stroke: #f020f0; stroke-width: 6; }
```
